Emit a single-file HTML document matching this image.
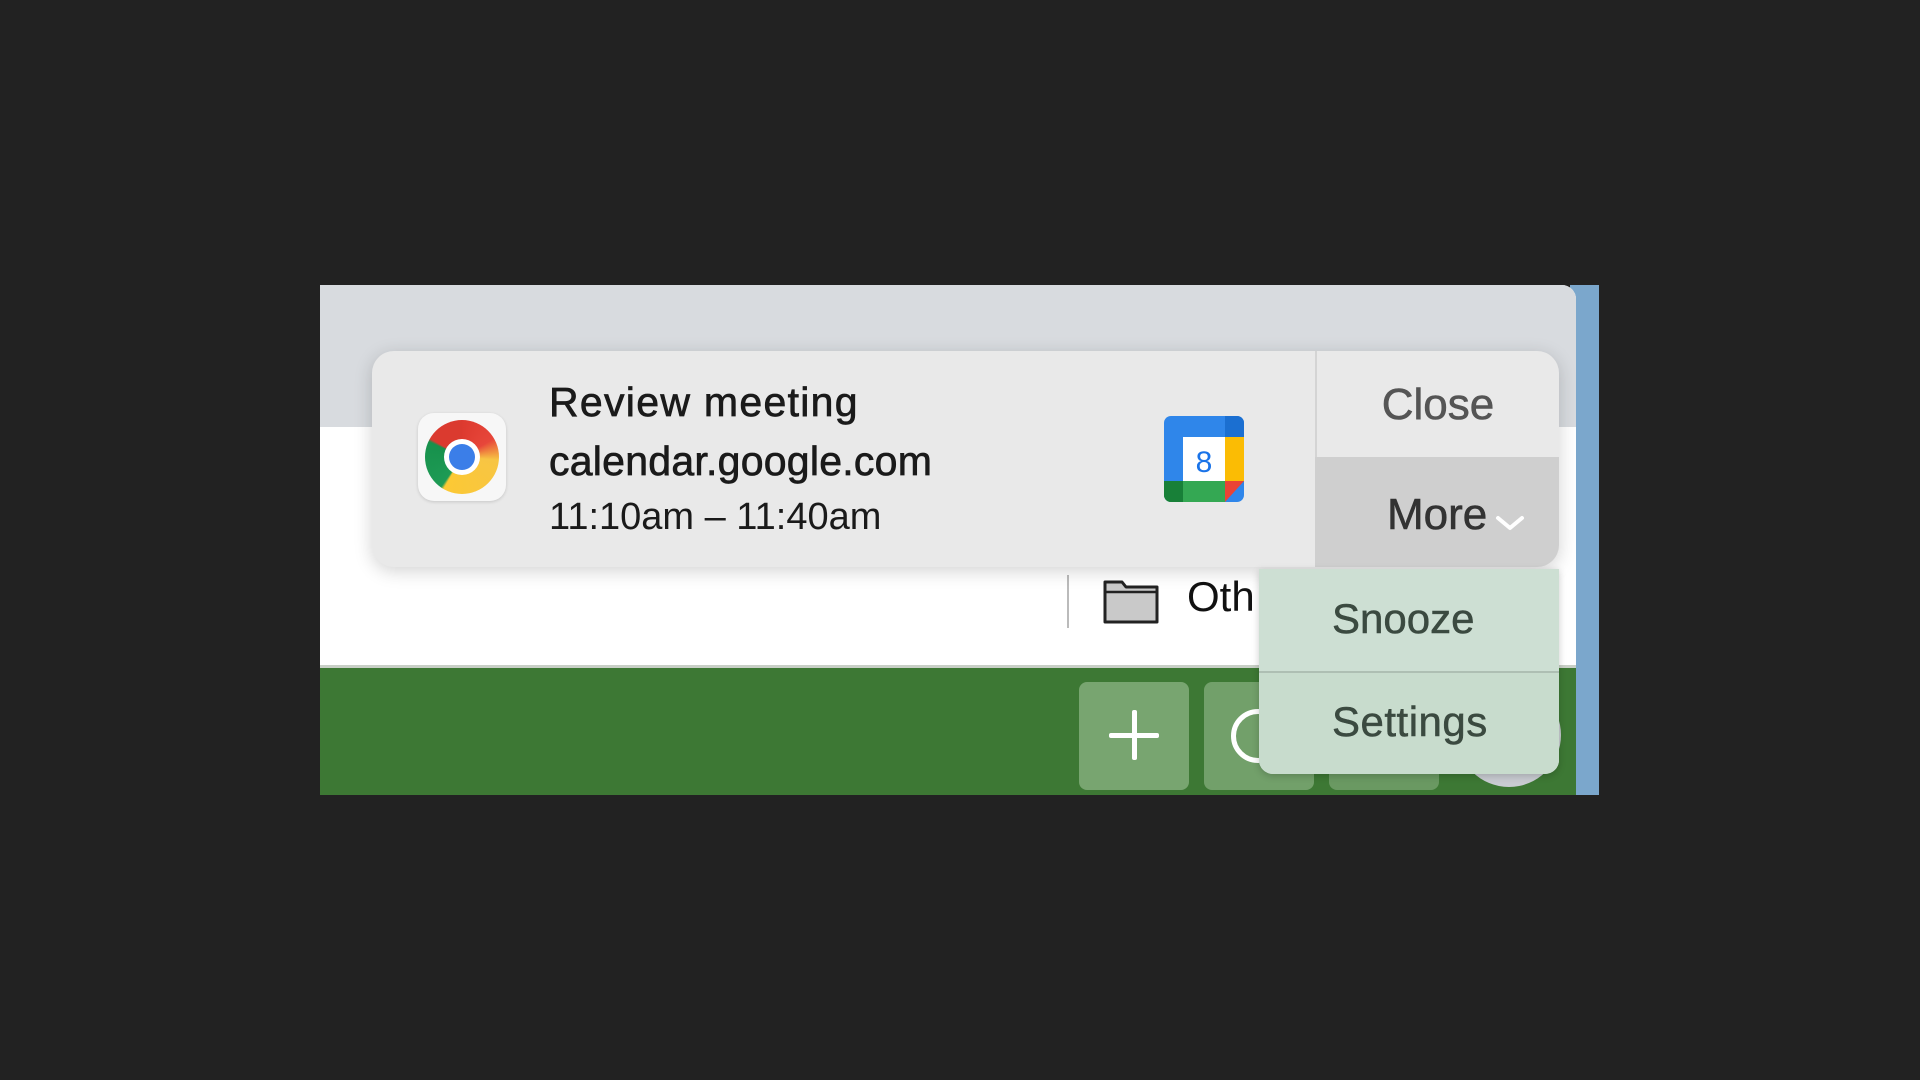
<!DOCTYPE html>
<html><head><meta charset="utf-8"><style>
*{margin:0;padding:0;box-sizing:border-box}
body{width:1920px;height:1080px;background:#222222;position:relative;overflow:hidden;font-family:"Liberation Sans",sans-serif}
.abs{position:absolute}
</style></head><body>
<div class="abs" style="left:1570px;top:285px;width:29px;height:510px;background:#7ba7cc"></div>
<div class="abs" style="left:320px;top:285px;width:1256px;height:510px;background:#fff;border-top-right-radius:14px;overflow:hidden">
  <div class="abs" style="left:0;top:0;width:1256px;height:142px;background:#d8dbdf"></div>
  <div class="abs" style="left:0;top:382px;width:1256px;height:128px;background:#3d7834"></div>
  <div class="abs" style="left:0;top:380px;width:1256px;height:3px;background:#c8cfc6"></div>
  <div class="abs" style="left:747px;top:290px;width:2px;height:53px;background:#bbb"></div>
  <svg class="abs" style="left:783px;top:295px" width="56" height="44" viewBox="0 0 56 44"><path d="M2 2h17l4 5h31v35H2z" fill="#c9c9c9" stroke="#222" stroke-width="3" stroke-linejoin="round"/><path d="M2 12h52" stroke="#222" stroke-width="2.5"/></svg>
  <div class="abs" style="left:867px;top:288px;font-size:42px;color:#111">Oth</div>
  <div class="abs" style="left:759px;top:397px;width:110px;height:108px;border-radius:8px;background:#78a570"></div>
  <div class="abs" style="left:884px;top:397px;width:110px;height:108px;border-radius:8px;background:#72a06a"></div>
  <div class="abs" style="left:1009px;top:397px;width:110px;height:108px;border-radius:8px;background:#6a9962"></div>
  <div class="abs" style="left:1137px;top:398px;width:104px;height:104px;border-radius:50%;background:#c9ccd2"></div>
  <div class="abs" style="left:789px;top:448px;width:50px;height:5px;background:#fff;border-radius:2px"></div>
  <div class="abs" style="left:812px;top:425px;width:5px;height:50px;background:#fff;border-radius:2px"></div>
  <div class="abs" style="left:911px;top:424px;width:54px;height:54px;border-radius:50%;border:5px solid #fff"></div>
</div>
<!-- notification -->
<div class="abs" style="left:372px;top:351px;width:1187px;height:216px;background:#e9e9e9;border-radius:22px;box-shadow:0 4px 18px rgba(0,0,0,.18);overflow:hidden">
  <div class="abs" style="left:943px;top:0;width:2px;height:216px;background:#d4d4d4"></div>
  <div class="abs" style="left:943px;top:106px;width:244px;height:110px;background:#cfcfcf"></div>
  <div class="abs" style="left:46px;top:62px;width:88px;height:88px;border-radius:16px;background:#f7f7f7;box-shadow:0 1px 3px rgba(0,0,0,.15)"></div>
  <div class="abs" style="left:53px;top:69px;width:74px;height:74px;border-radius:50%;background:conic-gradient(from 0deg,#dd3a2f 0deg,#e7463a 60deg,#f7c544 95deg,#fcc934 210deg,#1e9b55 215deg,#17914c 295deg,#db3a2f 300deg)"></div>
  <div class="abs" style="left:72px;top:88px;width:36px;height:36px;border-radius:50%;background:#fff"></div>
  <div class="abs" style="left:77px;top:93px;width:26px;height:26px;border-radius:50%;background:#3b7ee8"></div>
  <div class="abs" style="left:177px;top:28px;font-size:41px;letter-spacing:1.3px;color:#1a1a1a;-webkit-text-stroke:0.7px #1a1a1a;white-space:nowrap">Review meeting</div>
  <div class="abs" style="left:177px;top:87px;font-size:41px;letter-spacing:0.25px;color:#1a1a1a;-webkit-text-stroke:0.7px #1a1a1a;white-space:nowrap">calendar.google.com</div>
  <div class="abs" style="left:177px;top:145px;font-size:38px;color:#1a1a1a;white-space:nowrap">11:10am – 11:40am</div>
  <svg class="abs" style="left:789px;top:65px" width="86" height="86" viewBox="0 0 80 86">
    <rect x="0" y="0" width="80" height="86" rx="7" fill="#2f86ea"/>
    <path d="M61 0h12a7 7 0 0 1 7 7v14H61z" fill="#1b6fd1"/>
    <rect x="61" y="21" width="19" height="44" fill="#fbbc04"/>
    <path d="M0 65h61v21H7a7 7 0 0 1-7-7z" fill="#34a853"/>
    <path d="M0 65h19v21H7a7 7 0 0 1-7-7z" fill="#188038"/>
    <path d="M61 65h19L61 86z" fill="#ea4335"/>
    <rect x="19" y="21" width="42" height="44" fill="#fff"/>
    <text x="40" y="56" text-anchor="middle" font-family="Liberation Sans" font-size="30" fill="#1a73e8">8</text>
  </svg>
  <div class="abs" style="left:945px;top:29px;width:242px;text-align:center;font-size:44px;color:#555;-webkit-text-stroke:0.6px #555">Close</div>
  <div class="abs" style="left:1015px;top:139px;font-size:44px;color:#333;-webkit-text-stroke:0.6px #333">More</div>
  <svg class="abs" style="left:1123px;top:163px" width="30" height="18" viewBox="0 0 30 18"><path d="M3 4l12 10 12-10" fill="none" stroke="#fff" stroke-width="4" stroke-linecap="round" stroke-linejoin="round"/></svg>
</div>
<!-- dropdown -->
<div class="abs" style="left:1259px;top:569px;width:300px;height:205px;background:#cddfd3;border-radius:0 0 14px 14px;box-shadow:0 2px 8px rgba(0,0,0,.2);overflow:hidden">
  <div class="abs" style="left:0;top:102px;width:300px;height:2px;background:#aebfb3"></div>
  <div class="abs" style="left:0;top:104px;width:300px;height:101px;background:#c8dccd"></div>
  <div class="abs" style="left:73px;top:26px;font-size:42px;color:#3b4a40;-webkit-text-stroke:0.5px #3b4a40">Snooze</div>
  <div class="abs" style="left:73px;top:129px;font-size:42px;letter-spacing:0.5px;color:#3b4a40;-webkit-text-stroke:0.5px #3b4a40">Settings</div>
</div>
</body></html>
